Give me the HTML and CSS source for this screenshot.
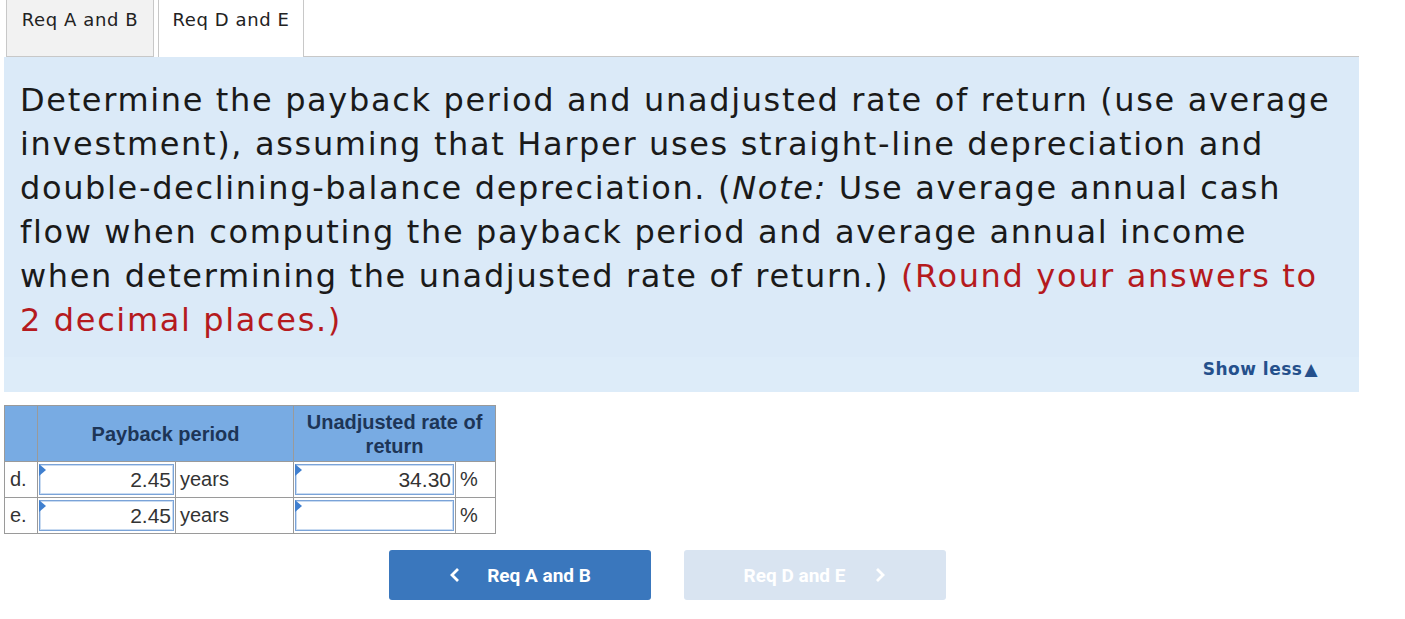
FILE: index.html
```html
<!DOCTYPE html>
<html>
<head>
<meta charset="utf-8">
<link rel="stylesheet" href="styles.css">
</head>
<body>
<div class="tabs">
  <div class="tab">Req A and B</div>
  <div class="tab active">Req D and E</div>
  <div class="tab-fill"></div>
</div>
<div class="panel">
  <p class="question">Determine the payback period and unadjusted rate of return (use average investment), assuming that Harper uses straight-line depreciation and double-declining-balance depreciation. (<em>Note:</em> Use average annual cash flow when computing the payback period and average annual income when determining the unadjusted rate of return.) <span class="red">(Round your answers to 2 decimal places.)</span></p>
  <div class="showless">Show less<span class="tri">&#9650;</span></div>
</div>
<table class="grid">
  <colgroup>
    <col class="w-lbl"><col class="w-c1"><col class="w-u1"><col class="w-c2"><col class="w-u2">
  </colgroup>
  <tr class="head">
    <th></th>
    <th colspan="2">Payback period</th>
    <th colspan="2">Unadjusted rate of<br>return</th>
  </tr>
  <tr class="row">
    <td class="lbl">d.</td>
    <td class="in"><div class="box"><span class="flag"></span>2.45</div></td>
    <td class="unit">years</td>
    <td class="in"><div class="box"><span class="flag"></span>34.30</div></td>
    <td class="unit">%</td>
  </tr>
  <tr class="row">
    <td class="lbl">e.</td>
    <td class="in"><div class="box"><span class="flag"></span>2.45</div></td>
    <td class="unit">years</td>
    <td class="in"><div class="box"><span class="flag"></span></div></td>
    <td class="unit">%</td>
  </tr>
</table>
<div class="nav">
  <div class="btn prev"><span class="chev">
    <svg width="12" height="16" viewBox="0 0 12 16"><path d="M9 2 L3 8 L9 14" fill="none" stroke="#fff" stroke-width="2.8"/></svg></span>Req A and B</div>
  <div class="btn next">Req D and E<span class="chev chev-r">
    <svg width="12" height="16" viewBox="0 0 12 16"><path d="M3 2 L9 8 L3 14" fill="none" stroke="#fff" stroke-width="2.8"/></svg></span></div>
</div>
</body>
</html>
```

FILE: styles.css
```css
html, body { margin: 0; padding: 0; background: #fff; }
body { font-family: "DejaVu Sans", Verdana, sans-serif; color: #1a1a1a; }

.tabs { display: flex; height: 57px; padding-left: 6px; box-sizing: border-box; }
.tab {
  width: 148px; box-sizing: border-box; height: 57px;
  background: #f2f2f2; border: 1px solid #c8c8c8; border-top: none;
  font-size: 18px; letter-spacing: 0.6px; text-align: center; padding-top: 9px; line-height: 22px; color: #222;
}
.tab.active { background: #fff; margin-left: 4px; width: 146px; border-bottom: none; }
.tab-fill { width: 1055px; height: 57px; border-bottom: 1px solid #c8c8c8; box-sizing: border-box; }

.panel { margin-left: 4px; width: 1355px; background: #dbeaf8; height: 335px; display: flex; flex-direction: column; }
.question { margin: 0; padding: 21px 16px 0 16px; font-size: 32px; letter-spacing: 1.65px; line-height: 44px; height: 279px; box-sizing: border-box; }
.question em { font-style: italic; }
.red { color: #b51a1e; }
.showless { margin-top: auto; height: 35px; background: #ddecf9; text-align: right; padding-right: 41px; font-weight: bold; font-size: 17px; letter-spacing: 0.5px; color: #24508c; line-height: 24px; }
.tri { font-size: 17px; margin-left: 2px; }

.grid { margin: 13px 0 0 4px; border-collapse: collapse; table-layout: fixed; width: 491px; font-family: "Liberation Sans", Arial, sans-serif; }
.w-lbl { width: 33px; }
.w-c1 { width: 138px; }
.w-u1 { width: 118px; }
.w-c2 { width: 162px; }
.w-u2 { width: 40px; }
.grid th, .grid td { border: 1px solid #9a9a9a; padding: 0; }
.head th { background: #78abe3; height: 55px; font-weight: bold; font-size: 20px; color: #1d3557; line-height: 24px; }
.row td { height: 35px; box-sizing: border-box; }
.lbl { font-size: 20px; color: #333; text-align: left; padding-left: 5px !important; }
.in { padding: 2px 1px !important; }
.box { position: relative; height: 31px; border: 1px solid #7aa3d8; box-shadow: inset 0 0 0 1px #c9dbf1; background: #fff; text-align: right; font-size: 21px; color: #333; line-height: 30px; padding-right: 2px; box-sizing: border-box; }
.flag { position: absolute; left: -1px; top: -1px; width: 0; height: 0; border-top: 6px solid transparent; border-bottom: 6px solid transparent; border-left: 7px solid #3f7fcf; }
.unit { font-size: 20px; color: #333; padding-left: 4px !important; text-align: left; }

.nav { display: flex; gap: 33px; margin: 16px 0 0 389px; }
.btn { width: 262px; height: 50px; border-radius: 3px; display: flex; align-items: center; justify-content: center; font-family: Roboto, sans-serif; font-weight: 700; font-size: 19px; color: #fff; }
.prev { background: #3a77bd; }
.next { background: #d9e4f1; }
.chev { display: inline-flex; margin-right: 26px; }
.chev-r { margin-left: 29px; margin-right: 0; }
```
